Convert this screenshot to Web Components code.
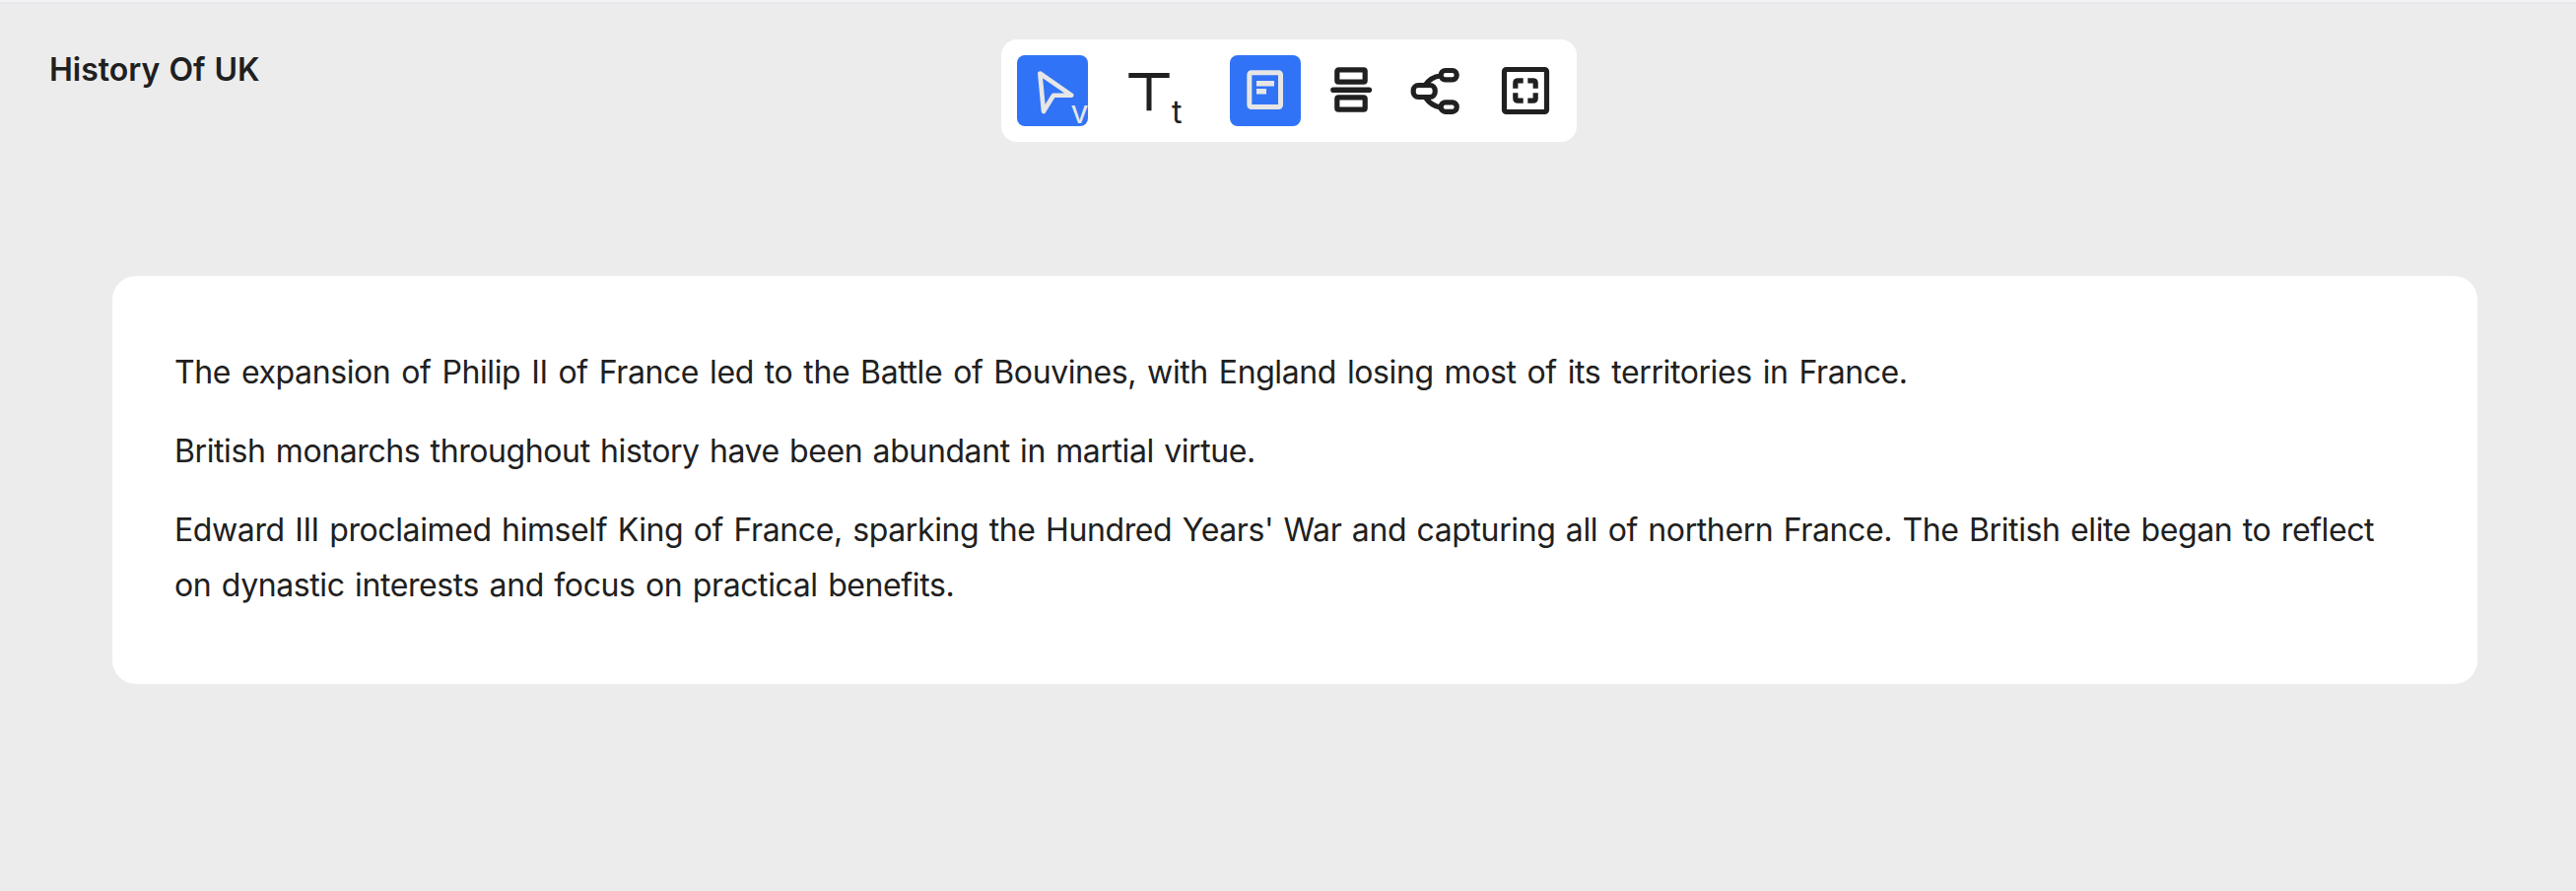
<!DOCTYPE html>
<html lang="en"><head><meta charset="utf-8"><title>History Of UK</title>
<style>
body{margin:0;font-family:Inter,"Liberation Sans",sans-serif;color:#202020;background:#ececec}
</style></head><body>
<history-board></history-board>
<script>
const define=(name,html)=>customElements.define(name,class extends HTMLElement{
  constructor(){super();this.attachShadow({mode:'open'}).innerHTML=html}
});
define('board-title',`<style>:host{display:block;font-size:32px;line-height:40px;font-weight:600;word-spacing:1px;white-space:nowrap}</style><slot></slot>`);
define('tool-button',`<style>
:host{display:block;position:relative;width:72px;height:72px;border-radius:8px}
:host([active]){background:#3173f6;color:#e6e6e6}
:host([small]){width:48px;height:48px;border-radius:0}
::slotted(svg){display:block;width:100%;height:100%;overflow:visible}
::slotted(span){position:absolute;font-size:32px;line-height:32px}
</style><slot></slot>`);
define('tool-bar',`<style>
:host{display:flex;align-items:center;box-sizing:border-box;width:584px;height:104px;padding:16px;border-radius:16px;background:#fff}
svg{fill:none;stroke:currentColor;stroke-width:5.2}
</style>
<tool-button active><svg viewBox="0 0 72 72" stroke-linejoin="round"><path stroke-width="4.6" d="M23.3 18.5 55.3 40.7H37L27 57Z"/></svg><span style="left:54.6px;top:42px">v</span></tool-button>
<tool-button style="margin-left:36px"><svg viewBox="0 0 72 72"><path stroke-width="5" d="M5.3 20.5H46.7M26 20.5V56.3"/></svg><span style="left:49px;top:42px">t</span></tool-button>
<tool-button active style="margin-left:36px"><svg viewBox="0 0 72 72"><rect x="19.8" y="17.8" width="31.7" height="34.7" rx="2" stroke-width="5"/><path d="M27 28.8H45M27 36.8H37" stroke-width="5.6"/></svg></tool-button>
<tool-button small style="margin-left:27px"><svg viewBox="0 0 48 48"><rect x="9.8" y="2.8" width="28.4" height="12.4" rx="1.5"/><path d="M6 23.2H42.3" stroke-width="5.6" stroke-linecap="round"/><rect x="9.8" y="30.8" width="28.4" height="12.4" rx="1.5"/></svg></tool-button>
<tool-button small style="margin-left:37px"><svg viewBox="0 0 48 48"><rect x="2.2" y="18.5" width="22" height="12" rx="5"/><rect x="30.2" y="3.5" width="16" height="9.4" rx="4.4"/><rect x="30.2" y="35.9" width="16" height="9.4" rx="4.4"/><path d="M14.5 18C18 13 23 9.7 29.5 9M14.5 31C18 36 23 39.8 29.5 41"/></svg></tool-button>
<tool-button small style="margin-left:44px"><svg viewBox="0 0 48 48"><rect x="2.5" y="2.5" width="43" height="43" rx="2"/><path d="M13.8 21.7V16.3Q13.8 13.8 16.3 13.8H21.7M26.3 13.8H31.7Q34.2 13.8 34.2 16.3V21.7M34.2 26.3V31.7Q34.2 34.2 31.7 34.2H26.3M21.7 34.2H16.3Q13.8 34.2 13.8 31.7V26.3"/></svg></tool-button>`);
define('note-card',`<style>
:host{display:block;box-sizing:border-box;width:2400px;height:414px;padding:70px 64px 70px 63px;border-radius:24px;background:#fff;font-size:32px;line-height:56px;letter-spacing:-.4px}
::slotted(p){margin:0 0 24px;white-space:nowrap}
</style><slot></slot>`);
define('history-board',`<style>
:host{display:block;box-sizing:border-box;height:904px;background:#ececec;border-top:2px solid #f3f3f4;box-shadow:inset 0 2px #e8e8ee}
header{display:grid;grid-template-columns:966px 584px;height:240px;padding:38px 0 0 50px;box-sizing:border-box}
board-title{padding-top:11px}
note-card{margin:38px 0 0 114px}
</style>
<header><board-title>History Of UK</board-title><tool-bar></tool-bar></header>
<note-card>
<p style="word-spacing:2.35px">The expansion of Philip II of France led to the Battle of Bouvines, with England losing most of its territories in France.</p>
<p style="word-spacing:1.7px">British monarchs throughout history have been abundant in martial virtue.</p>
<p style="word-spacing:1.9px">Edward III proclaimed himself King of France, sparking the Hundred Years' War and capturing all of northern France. The British elite began to reflect<br>on dynastic interests and focus on practical benefits.</p>
</note-card>`);
</script></body></html>
